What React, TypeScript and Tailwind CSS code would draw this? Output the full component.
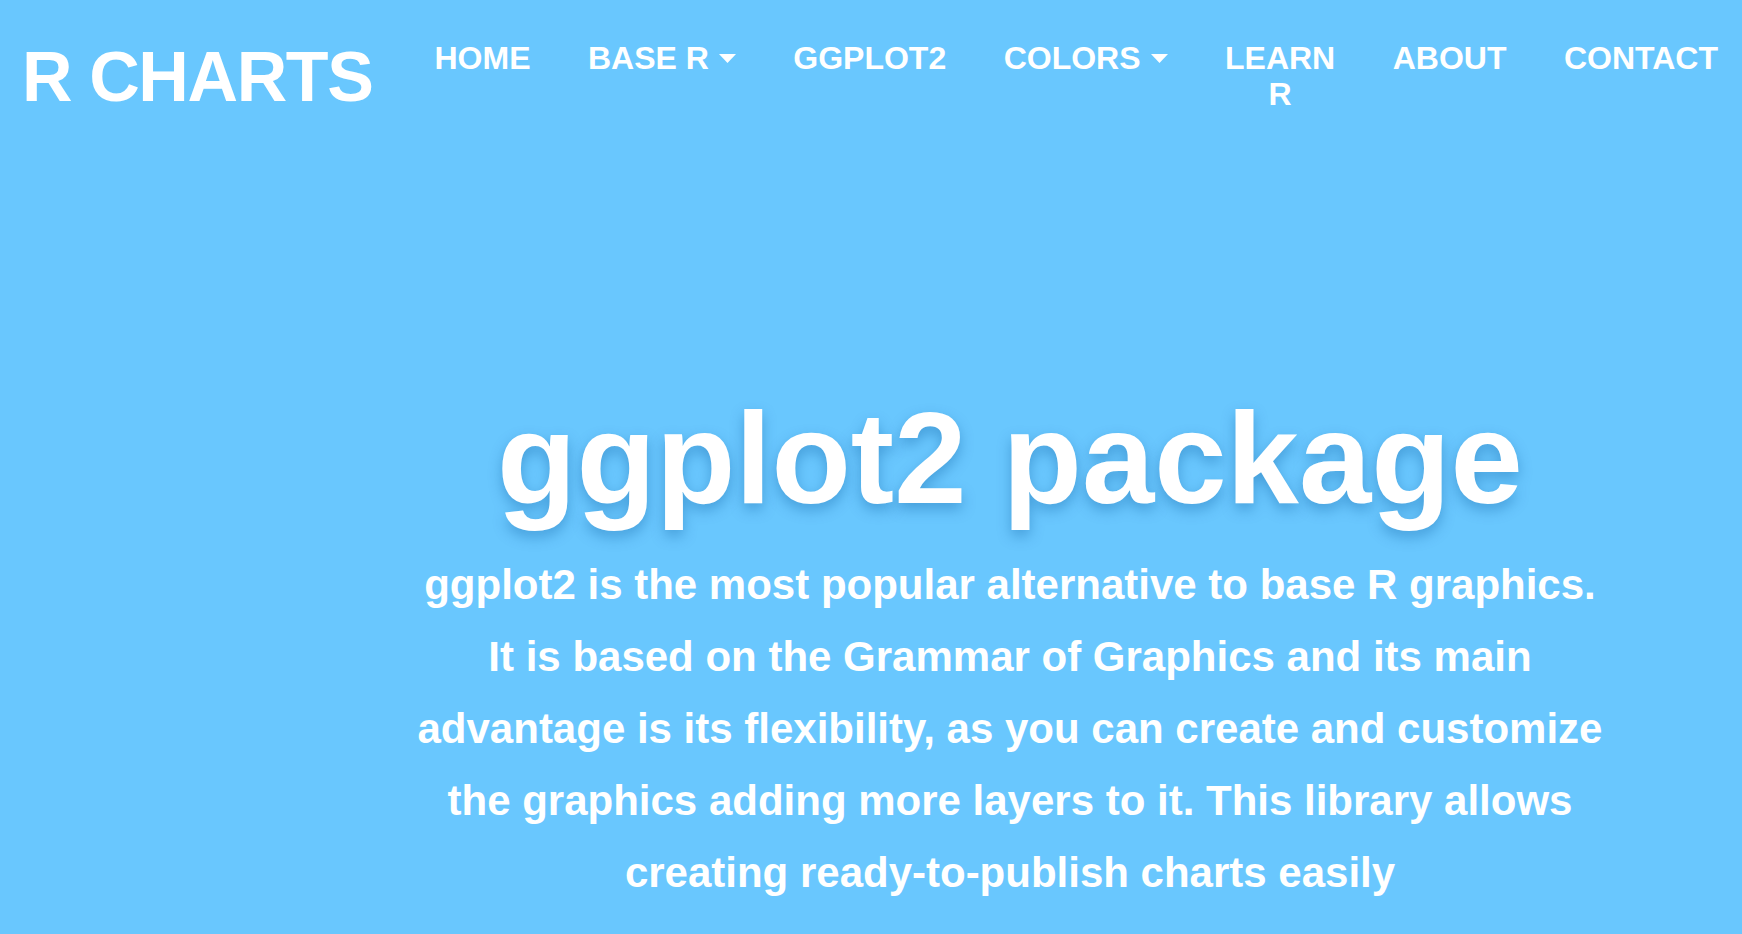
import React from "react";

const Caret = () => (
  <svg width="17" height="9" viewBox="0 0 17 9" className="ml-[10px] shrink-0">
    <polygon points="0,0 17,0 8.5,9" fill="white" />
  </svg>
);

export default function App() {
  const font = { fontFamily: '"Liberation Sans", Arial, sans-serif' };
  const navItem = "text-[32px] leading-[36px] font-bold text-white uppercase";
  return (
    <div className="min-h-[934px] w-full bg-[#69c7fe] text-white" style={font}>
      <header className="flex items-start pt-[42px] pl-[22px] pr-[24px]">
        <div className="text-[70px] leading-[70px] font-bold tracking-[-0.02em] whitespace-nowrap">
          R CHARTS
        </div>
        <nav className="ml-[62px] -mt-[2px] flex flex-1 items-start justify-between">
          <a className={navItem}>HOME</a>
          <a className={`${navItem} flex items-center`}>
            BASE R
            <Caret />
          </a>
          <a className={navItem}>GGPLOT2</a>
          <a className={`${navItem} flex items-center`}>
            COLORS
            <Caret />
          </a>
          <a className={`${navItem} text-center`}>
            LEARN
            <br />R
          </a>
          <a className={navItem}>ABOUT</a>
          <a className={navItem}>CONTACT</a>
        </nav>
      </header>
      <main className="ml-[278px] flex flex-col items-center pt-[281px]">
        <h1 className="text-[130px] leading-[130px] font-bold whitespace-nowrap [text-shadow:0_6px_14px_rgba(0,80,150,0.35)]">
          ggplot2 package
        </h1>
        <p className="mt-[26px] text-center text-[42px] leading-[72px] font-bold">
          <span className="block whitespace-nowrap">ggplot2 is the most popular alternative to base R graphics.</span>
          <span className="block whitespace-nowrap">It is based on the Grammar of Graphics and its main</span>
          <span className="block whitespace-nowrap">advantage is its flexibility, as you can create and customize</span>
          <span className="block whitespace-nowrap">the graphics adding more layers to it. This library allows</span>
          <span className="block whitespace-nowrap">creating ready-to-publish charts easily</span>
        </p>
      </main>
    </div>
  );
}
